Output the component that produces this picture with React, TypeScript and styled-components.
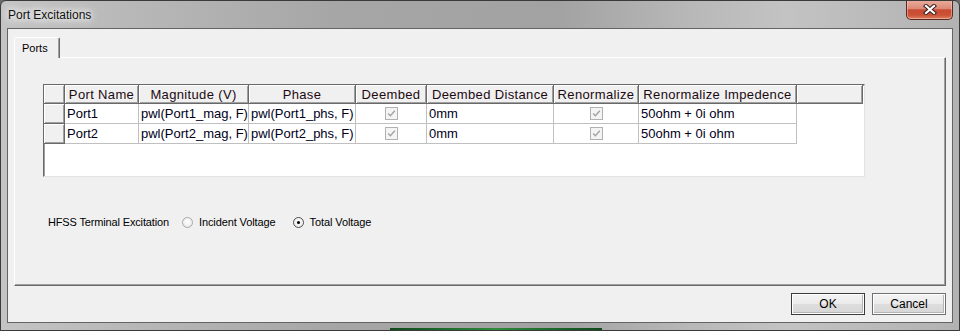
import styled, { createGlobalStyle } from "styled-components";

const GlobalStyle = createGlobalStyle`
  html, body {
    margin: 0;
    padding: 0;
    background: #6b6b6b;
  }
  body {
    font-family: "Liberation Sans", Arial, sans-serif;
  }
  * {
    box-sizing: border-box;
  }
`;

const columns = [21, 74, 110, 107, 71, 127, 85, 158, 66];
const template = columns.map((c) => `${c}px`).join(" ");

const headers = [
  "Port Name",
  "Magnitude (V)",
  "Phase",
  "Deembed",
  "Deembed Distance",
  "Renormalize",
  "Renormalize Impedence",
];

const ports = [
  { name: "Port1", mag: "pwl(Port1_mag, F)", phs: "pwl(Port1_phs, F)", dist: "0mm", imp: "50ohm + 0i ohm" },
  { name: "Port2", mag: "pwl(Port2_mag, F)", phs: "pwl(Port2_phs, F)", dist: "0mm", imp: "50ohm + 0i ohm" },
];

const Window = styled.div`
  position: relative;
  width: 960px;
  height: 331px;
  display: flex;
  flex-direction: column;
  border: 1px solid #3a3a3a;
  border-radius: 6px 6px 0 0;
  overflow: hidden;
  background: linear-gradient(
    90deg,
    #c4c4c4 0%,
    #b9b9b9 12%,
    #a6a6a6 35%,
    #a2a2a2 58%,
    #b8b8b8 72%,
    #c3c3c3 82%,
    #b2b2b2 100%
  );
`;

const TitleBar = styled.div`
  height: 27px;
  display: flex;
  align-items: center;
  padding: 0 6px 0 7px;
`;

const Title = styled.span`
  font-size: 12px;
  color: #111;
  margin-top: 1px;
  text-shadow: 0 0 6px #ffffff, 0 0 10px #ffffff, 0 0 14px #ffffff;
`;

const CloseButton = styled.div`
  margin-left: auto;
  align-self: flex-start;
  margin-top: -1px;
  width: 47px;
  height: 20px;
  border: 1px solid #5a2a22;
  border-top: none;
  border-radius: 0 0 5px 5px;
  display: flex;
  align-items: center;
  justify-content: center;
  background: linear-gradient(
    180deg,
    #eaae9f 0%,
    #dc8a76 45%,
    #c84a33 52%,
    #cc5236 80%,
    #de8364 100%
  );
  box-shadow: inset 0 0 0 1px rgba(255, 220, 210, 0.45);
`;

const Client = styled.div`
  flex: 1;
  margin: 0 6px 7px;
  border: 1px solid #646464;
  background: #f0f0f0;
  display: flex;
  flex-direction: column;
  padding: 8px 6px 7px 6px;
`;

const TabStrip = styled.div`
  display: flex;
  height: 20px;
`;

const Tab = styled.div`
  position: relative;
  z-index: 1;
  width: 46px;
  height: 21px;
  margin-bottom: -1px;
  background: #f0f0f0;
  border-top: 1px solid #ffffff;
  border-left: 1px solid #ffffff;
  border-right: 1px solid #696969;
  box-shadow: inset -1px 0 0 #a0a0a0;
  border-radius: 2px 2px 0 0;
  font-size: 11px;
  color: #000;
  padding: 4px 0 0 7px;
`;

const Page = styled.div`
  height: 229px;
  border-top: 1px solid #ffffff;
  border-left: 1px solid #ffffff;
  border-right: 1px solid #696969;
  border-bottom: 1px solid #696969;
  box-shadow: inset -1px -1px 0 #a0a0a0;
  display: flex;
  flex-direction: column;
  padding: 26px 0 0 28px;
`;

const Grid = styled.div`
  width: 822px;
  height: 93px;
  background: #ffffff;
  border: 1px solid;
  border-color: #696969 #e3e3e3 #e3e3e3 #696969;
  box-shadow: inset 1px 1px 0 #a0a0a0;
  font-size: 13px;
  color: #000;
`;

const Row = styled.div<{ $header?: boolean }>`
  display: grid;
  grid-template-columns: ${template};
  height: ${(p) => (p.$header ? 19 : 20)}px;
`;

const HeadCell = styled.div`
  background: #f0f0f0;
  border-right: 1px solid #696969;
  border-bottom: 1px solid #696969;
  box-shadow: inset 1px 1px 0 #ffffff, inset -1px -1px 0 #a0a0a0;
  display: flex;
  align-items: center;
  justify-content: center;
  white-space: nowrap;
  overflow: hidden;
  padding-top: 1px;
  color: #1c0a10;
  letter-spacing: 0.35px;
`;

const Cell = styled.div<{ $center?: boolean }>`
  border-right: 1px solid #c0c0c0;
  border-bottom: 1px solid #c0c0c0;
  display: flex;
  align-items: center;
  justify-content: ${(p) => (p.$center ? "center" : "flex-start")};
  padding-left: ${(p) => (p.$center ? 0 : 2)}px;
  white-space: nowrap;
  overflow: hidden;
  color: #00001a;
`;

const Checkbox = styled.svg`
  width: 13px;
  height: 13px;
  display: block;
`;

const ExcitationRow = styled.div`
  display: flex;
  align-items: center;
  height: 14px;
  margin: 38px 0 0 5px;
  font-size: 11px;
  color: #000;
`;

const Label = styled.span`
  margin-right: 13px;
  letter-spacing: -0.15px;
`;

const RadioOption = styled.label`
  display: flex;
  align-items: center;
  gap: 6px;
  margin-right: 17px;
  letter-spacing: -0.1px;
`;

const RadioDot = styled.span<{ $checked?: boolean }>`
  position: relative;
  width: 11px;
  height: 11px;
  border-radius: 50%;
  border: 1px solid ${(p) => (p.$checked ? "#4f4f4f" : "#a8a8a8")};
  background: radial-gradient(circle at 50% 40%, #ffffff 0%, #ececec 70%, #d6d6d6 100%);

  &::after {
    content: "";
    display: ${(p) => (p.$checked ? "block" : "none")};
    position: absolute;
    left: 3px;
    top: 3px;
    width: 3px;
    height: 3px;
    border-radius: 50%;
    background: #000;
  }
`;

const ButtonRow = styled.div`
  display: flex;
  justify-content: flex-end;
  gap: 7px;
  margin-top: 7px;
`;

const Button = styled.button<{ $default?: boolean }>`
  width: 74px;
  height: 22px;
  border: 1px solid ${(p) => (p.$default ? "#3c3c3c" : "#707070")};
  border-radius: 0;
  background: linear-gradient(180deg, #f3f3f3 0%, #ebebeb 48%, #dddddd 52%, #d6d6d6 100%);
  box-shadow: inset 0 0 0 1px #ffffff, inset -1px -1px 0 1px #b4b4b4;
  font-family: "Liberation Sans", Arial, sans-serif;
  font-size: 12px;
  color: #000;
  padding: 0;
`;

const TaskStrip = styled.span`
  position: absolute;
  left: 389px;
  bottom: 0;
  width: 212px;
  height: 2px;
  background: linear-gradient(90deg, #0f4a1c, #2f8a3a 50%, #0f4a1c);
`;

function DisabledCheck() {
  return (
    <Checkbox viewBox="0 0 13 13">
      <rect x="0.5" y="0.5" width="12" height="12" fill="#f4f4f4" stroke="#b1b1b1" />
      <path d="M3.2 6.5 L5.4 8.8 L9.8 3.8" fill="none" stroke="#a3a3a3" strokeWidth="1.4" />
    </Checkbox>
  );
}

function CloseGlyph() {
  return (
    <svg width="14" height="11" viewBox="0 0 14 11">
      <path d="M3 2 L11 9 M11 2 L3 9" stroke="#3a2420" strokeWidth="4.2" strokeLinecap="square" />
      <path d="M3 2 L11 9 M11 2 L3 9" stroke="#ffffff" strokeWidth="2.2" strokeLinecap="square" />
    </svg>
  );
}

export default function App() {
  return (
    <>
      <GlobalStyle />
      <Window>
        <TitleBar>
          <Title>Port Excitations</Title>
          <CloseButton>
            <CloseGlyph />
          </CloseButton>
        </TitleBar>
        <Client>
          <TabStrip>
            <Tab>Ports</Tab>
          </TabStrip>
          <Page>
            <Grid>
              <Row $header>
                <HeadCell />
                {headers.map((h) => (
                  <HeadCell key={h}>{h}</HeadCell>
                ))}
                <HeadCell />
              </Row>
              {ports.map((p) => (
                <Row key={p.name}>
                  <HeadCell />
                  <Cell>{p.name}</Cell>
                  <Cell>{p.mag}</Cell>
                  <Cell>{p.phs}</Cell>
                  <Cell $center>
                    <DisabledCheck />
                  </Cell>
                  <Cell>{p.dist}</Cell>
                  <Cell $center>
                    <DisabledCheck />
                  </Cell>
                  <Cell>{p.imp}</Cell>
                </Row>
              ))}
            </Grid>
            <ExcitationRow>
              <Label>HFSS Terminal Excitation</Label>
              <RadioOption>
                <RadioDot />
                Incident Voltage
              </RadioOption>
              <RadioOption>
                <RadioDot $checked />
                Total Voltage
              </RadioOption>
            </ExcitationRow>
          </Page>
          <ButtonRow>
            <Button $default>OK</Button>
            <Button>Cancel</Button>
          </ButtonRow>
        </Client>
        <TaskStrip />
      </Window>
    </>
  );
}
